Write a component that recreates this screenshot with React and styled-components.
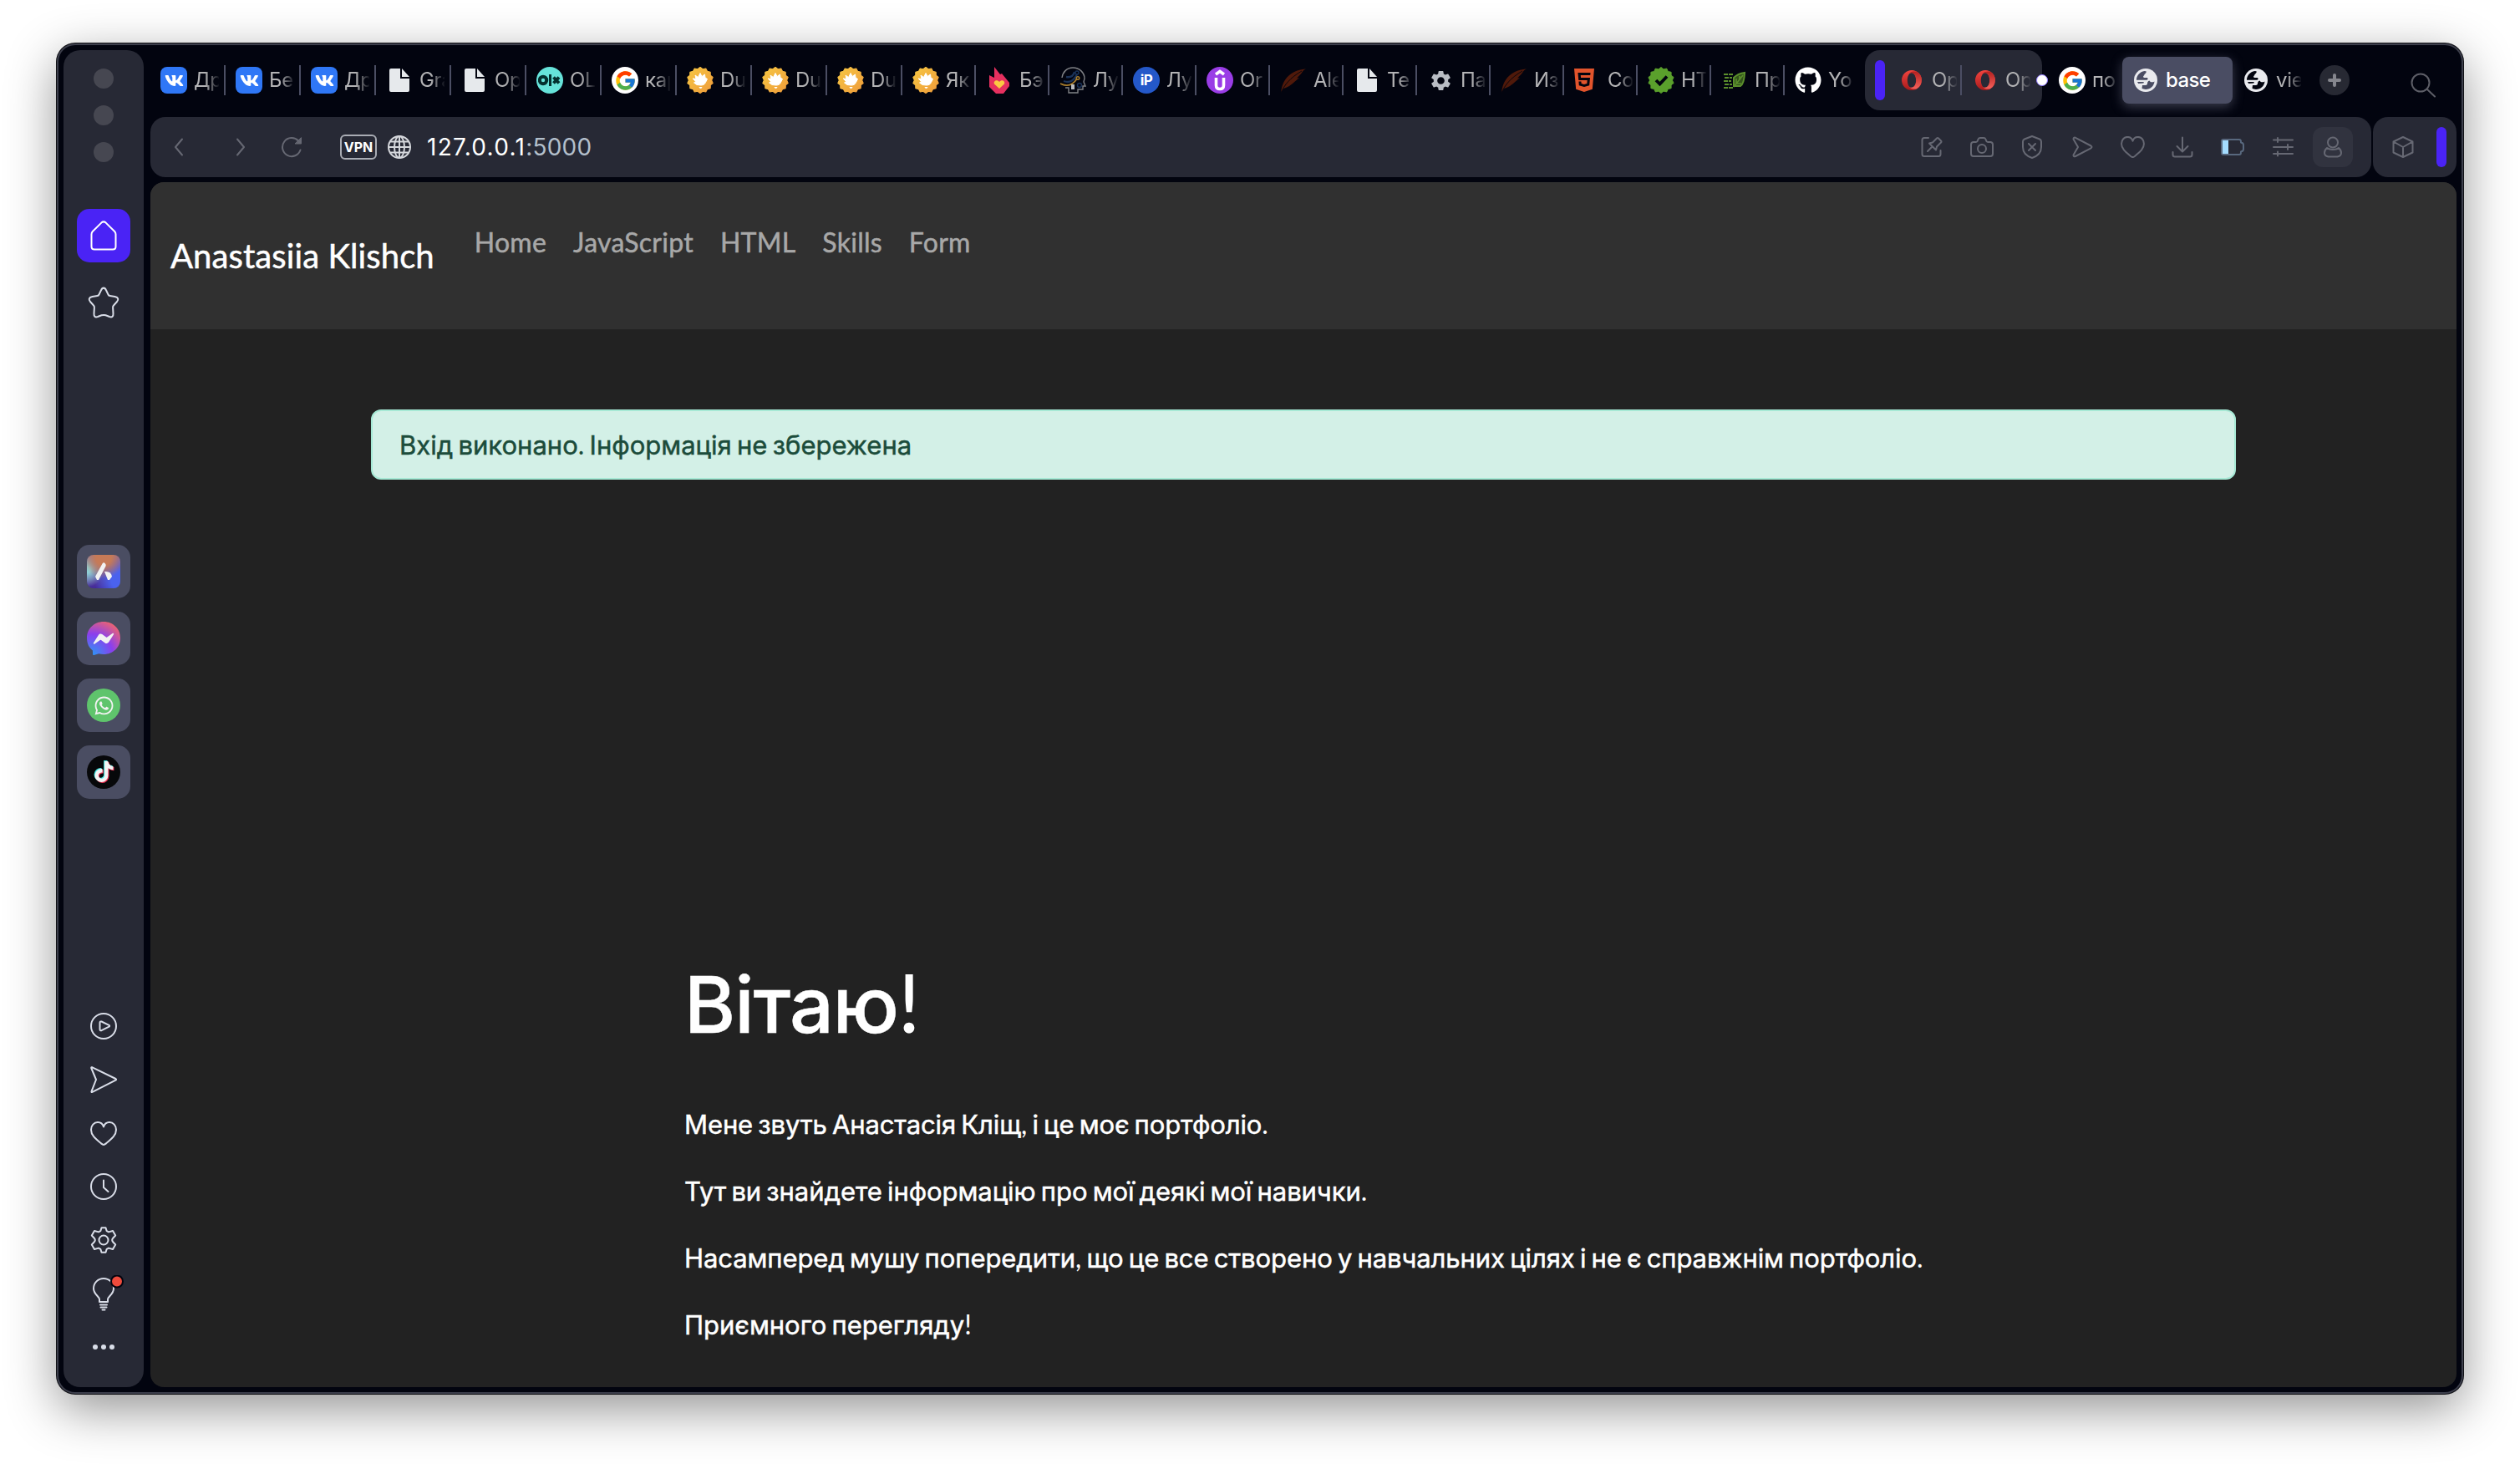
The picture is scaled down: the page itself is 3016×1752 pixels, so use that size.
import React from "react";
import styled, { createGlobalStyle, css } from "styled-components";
import { FaGithub, FaHtml5, FaWhatsapp, FaTiktok, FaVk } from "react-icons/fa";
import { FcGoogle } from "react-icons/fc";
import { MdSettings } from "react-icons/md";

const UI = `Inter, "Liberation Sans", sans-serif`;
const LATO = `Lato, "Liberation Sans", sans-serif`;

const GlobalStyle = createGlobalStyle`
  *, *::before, *::after { box-sizing: border-box; }
  body { margin: 0; background: #fff; font-family: ${UI}; overflow: hidden; }
  svg { display: block; flex: none; }
  h1, p { margin: 0; }
`;

const Desktop = styled.div`
  width: 3016px;
  height: 1752px;
  padding: 52px 68px 84px;
  background: #fff;
`;
const Window = styled.div`
  display: flex;
  gap: 8px;
  width: 2880px;
  height: 1616px;
  padding: 8px;
  border-radius: 22px;
  background: #02040f;
  box-shadow: inset 0 0 0 2px #3d3f4c, 0 0 0 1px #101014, 0 18px 60px rgba(0, 0, 0, 0.43);
`;

/* ---------- sidebar ---------- */
const Sidebar = styled.aside`
  display: flex;
  flex-direction: column;
  align-items: center;
  width: 96px;
  height: 1600px;
  border-radius: 20px;
  background: #272935;
  color: #d9dde8;
`;
const Lights = styled.div`
  display: flex;
  flex-direction: column;
  gap: 20px;
  margin-top: 22px;
`;
const Light = styled.span`
  width: 24px;
  height: 24px;
  border-radius: 50%;
  background: #464751;
`;
const Tile = styled.div`
  display: grid;
  place-items: center;
  width: 64px;
  height: 64px;
  border-radius: 15px;
  background: ${(p) => p.$bg || "#4a4d62"};
`;
const Workspaces = styled.div`
  display: flex;
  flex-direction: column;
  align-items: center;
  gap: 16px;
  margin-top: 56px;
`;
const Slot = styled.div`
  display: grid;
  place-items: center;
  width: 64px;
  height: 64px;
`;
const Messengers = styled(Workspaces)`
  margin-top: 258px;
`;
const Tools = styled.div`
  display: flex;
  flex-direction: column;
  align-items: center;
  margin-top: 240px;
`;
const AppDisc = styled.div`
  display: grid;
  place-items: center;
  width: 40px;
  height: 40px;
  border-radius: ${(p) => p.$r || "50%"};
  background: ${(p) => p.$bg};
  color: #f2f2f2;
`;

/* ---------- tab strip ---------- */
const Main = styled.div`
  display: flex;
  flex-direction: column;
  width: 2760px;
`;
const TabStrip = styled.div`
  display: flex;
  align-items: center;
  height: 72px;
`;
const Tab = styled.div`
  display: flex;
  align-items: center;
  flex: none;
  width: ${(p) => p.$w || 88}px;
  height: 56px;
  padding-left: 12px;
  border-radius: 8px;
  ${(p) =>
    p.$active &&
    css`
      background: #4a4d63;
      box-shadow: 0 4px 14px rgba(150, 150, 175, 0.38);
    `}
`;
const Favicon = styled.span`
  display: grid;
  place-items: center ${(p) => (p.$start ? "start" : "center")};
  flex: none;
  width: 32px;
  height: 32px;
  margin-right: 8px;
`;
const TabLabel = styled.span`
  width: ${(p) => (p.$active ? 70 : 30)}px;
  overflow: hidden;
  white-space: nowrap;
  font: ${(p) => (p.$active ? 500 : 400)} 24px/36px ${UI};
  letter-spacing: ${(p) => (p.$active ? "-0.6px" : "-0.3px")};
  color: ${(p) => (p.$active ? "#fff" : "#b4b4b6")};
  ${(p) => !p.$active && "mask-image: linear-gradient(90deg, #000 45%, transparent 104%);"}
`;
const Divider = styled.span`
  width: 2px;
  height: 36px;
  margin-left: auto;
  background: #4b4e63;
`;
const Disc = styled.span`
  display: grid;
  place-items: center;
  width: 32px;
  height: 32px;
  border-radius: ${(p) => p.$r || "50%"};
  background: ${(p) => p.$bg};
  color: ${(p) => p.$c || "#fff"};
  font: 700 ${(p) => p.$fs || 17}px/32px ${UI};
  letter-spacing: -0.5px;
`;
const TabGroup = styled.div`
  position: relative;
  display: flex;
  align-items: center;
  width: 212px;
  height: 72px;
  margin: 0 8px;
  padding-left: 12px;
  border-radius: 18px;
  background: #272935;
`;
const Pill = styled.span`
  flex: none;
  width: 12px;
  height: 48px;
  margin-right: ${(p) => p.$gap || 0}px;
  border-radius: 6px;
  background: #4a23f5;
`;
const GroupDot = styled.span`
  position: absolute;
  right: -7px;
  top: 29px;
  width: 14px;
  height: 14px;
  border-radius: 50%;
  background: #fff;
  border: 1px solid #8f78ff;
`;
const NewTab = styled.div`
  display: grid;
  place-items: center;
  width: 36px;
  height: 36px;
  margin-left: 16px;
  border-radius: 50%;
  background: #272933;
`;
const SearchTabs = styled.div`
  margin: 12px 0 0 73px;
  color: #5d5e67;
`;

/* ---------- address bar ---------- */
const BarRow = styled.div`
  display: flex;
  gap: 2px;
  margin-top: 8px;
`;
const Bar = styled.div`
  display: flex;
  align-items: center;
  justify-content: space-between;
  height: 72px;
  width: ${(p) => p.$w}px;
  padding: ${(p) => p.$pad};
  border-radius: 18px;
  background: #272935;
  color: #666873;
`;
const Address = styled.div`
  display: flex;
  align-items: center;
`;
const Forward = styled.span`
  margin: 0 42px 0 62px;
`;
const VpnBadge = styled.span`
  width: 44px;
  height: 30px;
  margin: 0 13px 0 45px;
  border: 2px solid #a9acb4;
  border-radius: 6px;
  font: 700 16px/26px ${UI};
  text-align: center;
  color: #fff;
`;
const Url = styled.span`
  margin-left: 19px;
  font: 400 28px/40px ${UI};
  letter-spacing: 1.3px;
  color: #fff;
`;
const Port = styled.span`
  letter-spacing: 0.2px;
  color: #b3bfcb;
`;
const Actions = styled.div`
  display: grid;
  grid-template-columns: repeat(9, 60px);
  place-items: center;
`;
const Profile = styled.span`
  display: grid;
  place-items: center;
  width: 48px;
  height: 48px;
  border-radius: 12px;
  background: #31333f;
`;

/* ---------- page ---------- */
const Page = styled.main`
  height: 1442px;
  margin-top: 6px;
  border-radius: 16px;
  overflow: hidden;
  background: #222;
`;
const SiteNav = styled.nav`
  display: flex;
  align-items: flex-start;
  height: 176px;
  padding-left: 24px;
  background: #303030;
  font-family: ${LATO};
`;
const Brand = styled.span`
  margin-top: 58px;
  font-size: 40px;
  line-height: 60px;
  letter-spacing: 0.1px;
  color: #fff;
  -webkit-text-stroke: 0.5px currentColor;
`;
const Links = styled.div`
  display: flex;
  gap: 32px;
  margin: 48px 0 0 48px;
`;
const NavLink = styled.span`
  font-size: 32px;
  line-height: 48px;
  letter-spacing: 0.25px;
  color: #a8a8a8;
  -webkit-text-stroke: 0.5px currentColor;
`;
const Alert = styled.div`
  width: 2232px;
  height: 84px;
  margin: 96px 0 0 264px;
  padding-left: 32px;
  border: 2px solid #a6e9d5;
  border-radius: 12px;
  background: #d3f0e7;
  font: 400 32px/80px ${LATO};
  word-spacing: -2px;
  color: #1c4c3b;
`;
const Hero = styled.section`
  padding: 565px 0 0 639px;
  color: #fff;
  font-family: ${LATO};
`;
const Title = styled.h1`
  font-size: 96px;
  font-weight: 500;
  line-height: 120px;
`;
const Line = styled.p`
  font-size: 32px;
  line-height: 48px;
  margin-bottom: 32px;
  word-spacing: -2px;
`;
const Copy = styled.div`
  margin-top: 62px;
`;
const Cyr = styled.span`
  font-family: ${UI};
  font-size: 0.97em;
  line-height: 0;
  letter-spacing: ${(p) => p.$ls || 0}px;
  -webkit-text-stroke: 0.5px currentColor;
`;

/* Cyrillic runs use the UI face, everything else stays in Lato */
const Mixed = ({ text, ls }) =>
  text
    .split(/([\u0400-\u04FF]+)/)
    .map((part, i) => (i % 2 ? <Cyr key={i} $ls={ls}>{part}</Cyr> : part));

/* ---------- icons ---------- */
const Stroke = ({ w, h = w, vb, sw = 2, children, ...rest }) => (
  <svg width={w} height={h} viewBox={vb || `0 0 ${w} ${h}`} fill="none" stroke="currentColor" strokeWidth={sw} strokeLinecap="round" strokeLinejoin="round" {...rest}>
    {children}
  </svg>
);

const VkIcon = () => (
  <Disc $bg="#2f77f6" $r="8px"><FaVk size={23} /></Disc>
);
const DocIcon = () => (
  <svg width="24" height="28" viewBox="0 0 24 28" fill="#e6e9ec">
    <path d="M2 0h11v12h11v14q0 2-2 2H2q-2 0-2-2V2q0-2 2-2z" />
    <path d="M15 0l9 10h-9z" />
  </svg>
);
const OlxIcon = () => (
  <Disc $bg="#66e3da">
    <svg width="28" height="16" viewBox="0 0 28 16" fill="none" stroke="#04302f">
      <circle cx="6" cy="8" r="4.2" strokeWidth="4" />
      <path d="M14.500 1v14" strokeWidth="3" />
      <path d="M18.500 4.500l6.500 7M25 4.500l-6.500 7" strokeWidth="3.800" />
    </svg>
  </Disc>
);
const GoogleIcon = () => <Disc $bg="#fff"><FcGoogle size={27} /></Disc>;
const gearPoints = (n, r1, r2, c) =>
  Array.from({ length: n * 2 }, (_, i) => {
    const a = (Math.PI * i) / n - Math.PI / 2;
    const r = i % 2 ? r2 : r1;
    return `${(c + r * Math.cos(a)).toFixed(2)},${(c + r * Math.sin(a)).toFixed(2)}`;
  }).join(" ");
const SunIcon = () => (
  <svg width="32" height="32" viewBox="0 0 32 32">
    <defs>
      <linearGradient id="sun" x1="0" y1="0" x2="1" y2="1">
        <stop offset="0" stopColor="#f7c843" />
        <stop offset="1" stopColor="#ee9a3a" />
      </linearGradient>
    </defs>
    <polygon points={gearPoints(14, 15.5, 13.6, 16)} fill="url(#sun)" stroke="url(#sun)" strokeWidth="1.200" strokeLinejoin="round" />
    <path d="M7 14l4 .5-1-4.500 3.500 2.500L16 7.500l2 4 3.500-2.500.500 4 2.500 1.500-2 4c-1 2.500-3 3.500-5.500 3.500l-5-.5-3.500-2.500 2-1.500z" fill="#fff" stroke="#fff" strokeLinejoin="round" />
    <path d="M14.500 24h4q-.5 2-2 2t-2-2z" fill="#fff" />
  </svg>
);
const FlameIcon = () => (
  <svg width="24" height="32" viewBox="0 0 24 32">
    <path d="M6 0l7 9 2-1 9 11v4l-7 9H8l-8-8V10l6 3z" fill="#e6305f" />
    <path d="M12 26l-6-5.500c-1.500-4 3.500-6 6-2.500 2.500-3.500 7.500-1.500 6 2.500z" fill="#fbc943" />
  </svg>
);
const HeadIcon = () => (
  <svg width="32" height="32" viewBox="0 0 32 32" fill="none" strokeWidth="1.400">
    <path d="M3 13C4 6 9 1 16 1c8 0 14 6 14 13l-1 4 2 5h-3v4h-6v4h-11v-6H7" stroke="#808286" />
    <path d="M5 17c8 3 12-1 16-8M8 12c6 1 9-2 10-6" stroke="#1a3258" strokeWidth="2.400" />
    <circle cx="21" cy="7" r="2" stroke="#1a3258" />
    <path d="M1 20c8 4 15 2 20-6" stroke="#a87d2c" strokeWidth="1.800" />
    <circle cx="22" cy="13.500" r="1.800" stroke="#a87d2c" />
    <circle cx="24" cy="22" r="2.500" stroke="#1a3258" />
    <path d="M14 21h4v6h-4z" fill="#b9bbbf" />
  </svg>
);
const UIcon = () => (
  <Disc $bg="#9a3de6">
    <Stroke w={16} h={26} sw={3.6} strokeLinecap="butt" strokeLinejoin="miter">
      <path d="M3 6l5-3.500 5 3.500" />
      <path d="M3.500 10v9q0 4.500 4.500 4.500t4.500-4.500v-9" />
    </Stroke>
  </Disc>
);
const FeatherIcon = () => (
  <svg width="32" height="32" viewBox="0 0 32 32">
    <path d="M1 31c1-8 3-15 10-21C17 5 24 3 31 2.500c-3 1-4 3-6 6l-5 5 3-.5-8 7-4 3-4 2-3 1z" fill="#4f190a" />
    <path d="M1 31C5 22 12 13 26 5" stroke="#02040f" strokeWidth="0.900" fill="none" />
  </svg>
);
const CheckIcon = () => (
  <svg width="32" height="32" viewBox="0 0 32 32">
    <polygon points={gearPoints(14, 15.5, 13.4, 16)} fill="#5aa02c" stroke="#5aa02c" strokeLinejoin="round" />
    <path d="M10 16l4.500 4.500L23 11.500" fill="none" stroke="#02040f" strokeWidth="3.800" />
  </svg>
);
const LeafIcon = () => (
  <svg width="28" height="24" viewBox="0 0 28 24" fill="none" stroke="#5b8f2c" strokeWidth="2">
    <path d="M1 5h12M2 9h9M1 13h9M2 17h9M1 21h12" strokeDasharray="5 1" />
    <path d="M13 19V9q5-5 13-6-.5 13-5 16z" fill="#33541c" />
    <path d="M13 20L24 6M16 10v6h6M20 7v5" strokeWidth="1.600" />
  </svg>
);
const OperaIcon = () => (
  <svg width="24" height="24" viewBox="0 0 24 24">
    <defs>
      <linearGradient id="op" x1="0" y1="0" x2="0" y2="1">
        <stop offset="0" stopColor="#f2453f" />
        <stop offset="1" stopColor="#a81a1c" />
      </linearGradient>
      <linearGradient id="op2" x1="0" y1="0" x2="0" y2="1">
        <stop offset="0" stopColor="#b5201f" />
        <stop offset="1" stopColor="#f4625c" />
      </linearGradient>
    </defs>
    <path fillRule="evenodd" fill="url(#op)" d="M12 0a12 12 0 1 0 0 24 12 12 0 0 0 0-24zm0 3c3 0 5.200 4 5.200 9S15 21 12 21s-5.200-4-5.200-9S9 3 12 3z" />
    <path fill="url(#op2)" d="M9 3.800C11 1.500 15 1 18 1.700A12 12 0 0 1 18 22.300c-3 .7-7 .2-9-2.100 4 2 8.200-1.500 8.200-8.200S13 1.800 9 3.800z" />
  </svg>
);
const EarthIcon = ({ bg = "#02040f" }) => (
  <svg width="28" height="28" viewBox="0 0 28 28">
    <circle cx="14" cy="14" r="14" fill="#e9eaee" />
    <path fill={bg} d="M3 13.500C3 8.500 7 4 12.500 3l2 .2c.8 1.300-.8 3-2 3.800 0 1.500-1.500 1.800-1.500 3 0 1 2 1 4 1 2.500 0 2 3-.5 2.800H3z" />
    <path fill={bg} d="M9.500 23.800l.5-3.800h4c1 0 2-.8 2-2s.5-3 2.500-3.500c1 2 3.500 2.500 6 1-.5 5.500-5 9.500-10.500 9.500-1.700 0-3.200-.5-4.500-1.200z" />
    <path fill={bg} d="M4 16h7c1.200 0 1.200 1.500 0 1.500l-2 .3-3.800.2z" />
  </svg>
);
const GridGlobe = () => (
  <Stroke w={28} color="#d5d7dc" sw={2}>
    <circle cx="14" cy="14" r="13" />
    <ellipse cx="14" cy="14" rx="6" ry="13" />
    <path d="M1.500 14h25M14 1v26M3.500 7.500h21M3.500 20.500h21" />
  </Stroke>
);
const HeartIcon = ({ w = 32, h = 29, sw = 2 }) => (
  <Stroke w={w} h={h} vb="0 0 32 29" sw={sw}>
    <path d="M16 28c-1 0-2-.8-3-1.600C6 20.500 1 16.500 1 10c0-5 3.500-9 8-9 3.500 0 6 2 7 5.500C17 3 19.500 1 23 1c4.500 0 8 4 8 9 0 6.500-5 10.500-12 16.400-1 .8-2 1.600-3 1.600z" />
  </Stroke>
);
const HomeIcon = () => (
  <Stroke w={32} h={36} color="#fff">
    <path d="M1.500 16.500q0-2 1.300-3.500L13.300 2.600q2.700-2.400 5.400 0L29.200 13q1.300 1.500 1.300 3.500V31q0 3.500-3.500 3.500H5Q1.500 34.500 1.500 31z" />
  </Stroke>
);
const StarIcon = () => (
  <Stroke w={38} h={40} vb="0 -1 38 38" preserveAspectRatio="none">
    <path d="M19 1.500c1.500 0 2.300 1 3 2.500l2.500 5c.4.900 1 1.300 2 1.400l6 .9c4 .7 5 3.200 2.300 6l-3.800 4c-.8.800-1 1.500-.9 2.500l.4 6.700c.3 3.700-1.500 4.700-4.500 3.700l-4.500-1.700q-2-.6-5 0l-4.500 1.700c-3 1-4.800 0-4.500-3.700l.4-6.700c.1-1-.1-1.700-.9-2.500l-3.800-4c-2.700-2.800-1.700-5.300 2.300-6l6-.9c1-.1 1.600-.5 2-1.400l2.500-5c.7-1.500 1.500-2.500 3-2.500z" />
  </Stroke>
);
const AriaIcon = () => (
  <AppDisc $r="8px" $bg="radial-gradient(circle at 50% 8%, #c67a57 0 22%, transparent 60%), radial-gradient(circle at 0 45%, #8fd0d6 0 8%, transparent 45%), radial-gradient(circle at 100% 75%, #4a62ee 0 22%, transparent 62%), linear-gradient(#8a6a98, #432a9a)">
    <svg width="20" height="22" viewBox="0 0 20 22" fill="#f2f2f2">
      <path d="M8.500 1.500Q10.500-1 12.300 2q.8 1.500 0 3L4 21H2L0 17z" />
      <path d="M11 11q8-1 9 6l-3 4h-2z" />
    </svg>
  </AppDisc>
);
const MessengerIcon = () => (
  <svg width="40" height="40" viewBox="0 0 40 40">
    <defs>
      <radialGradient id="ms" cx="0.150" cy="1" r="1.150">
        <stop offset="0" stopColor="#2a98f5" />
        <stop offset="0.550" stopColor="#8a3fee" />
        <stop offset="1" stopColor="#f2656a" />
      </radialGradient>
    </defs>
    <path fill="url(#ms)" d="M20 0c11.500 0 20 8.500 20 19.500S31.500 39 20 39c-2 0-4-.3-5.800-.8L8.500 40q-1.300.3-1.400-1l-.2-4.500C2.500 31 0 26 0 19.500 0 8.500 8.500 0 20 0z" />
    <path fill="#f2f2f2" d="M8 25.200l5.900-9.300c1-1.500 3-1.900 4.400-.8l4.700 3.500q.6.500 1.200 0L30.600 14c.8-.7 2 .3 1.400 1.300l-5.900 9.300c-1 1.500-3 1.900-4.400.8L17 21.900q-.6-.5-1.200 0L9.400 26.500c-.9.700-2-.4-1.400-1.300z" />
  </svg>
);
const TikTok = () => (
  <AppDisc $bg="#07080a">
    <svg width="27" height="28" viewBox="-1 -1 27 28">
      <FaTiktok x="-1" y="-1" size={25} color="#43e5e0" />
      <FaTiktok x="1" y="1" size={25} color="#ee3355" />
      <FaTiktok x="0" y="0" size={25} color="#f4f4f4" />
    </svg>
  </AppDisc>
);
const CogIcon = () => (
  <Stroke w={32}>
    <path d="M13.500 1.200h5l1.200 4 2.300 1.200 5-1.400 3.200 5.500-3 3.200q-.8 1-1 2.300.2 1.300 1 2.300l3 3.200-3.200 5.500-5-1.400-2.300 1.200-1.200 4h-5l-1.200-4-2.300-1.200-5 1.400-3.200-5.500 3-3.200q.8-1 1-2.300-.2-1.300-1-2.300l-3-3.200L5 5l5 1.400 2.300-1.200z" />
    <circle cx="16" cy="16" r="5.500" />
  </Stroke>
);
const BulbIcon = () => (
  <Stroke w={52} h={44} vb="-13 0 52 44">
    <path d="M8 32v-3C8 25.500 1 23 1 16 1 9 6.500 4 13 4s12 5 12 12c0 7-7 9.500-7 13v3" />
    <path d="M9 32h8M9 35.500h8M9.500 38.500h7M11.500 41.500h3" />
    <circle cx="29" cy="7.500" r="7" fill="#ee4b3c" stroke="#02040f" />
  </Stroke>
);
const sideTools = [
  <Stroke w={32} key="play"><circle cx="16" cy="16" r="15" /><path d="M11.500 12q0-2 2-1.500l9 4.300q1.300.9 0 1.900l-9 4.500q-2 .5-2-1.500z" /></Stroke>,
  <Stroke w={32} key="send"><path d="M1.200 2q0-1.200 1.300-.7L30.500 15q1.300.8 0 1.600L2.500 30.900q-1.300.5-1-.8L7 16z" /></Stroke>,
  <HeartIcon key="heart" />,
  <Stroke w={32} key="clock"><circle cx="16" cy="16" r="15" /><path d="M16 8.500V17l5.500 5" /></Stroke>,
  <CogIcon key="cog" />,
  <BulbIcon key="bulb" />,
  <svg key="dots" width="26" height="6" viewBox="0 0 26 6" fill="currentColor"><circle cx="3" cy="3" r="3" /><circle cx="13" cy="3" r="3" /><circle cx="23" cy="3" r="3" /></svg>,
];
const actions = [
  <Stroke w={26} key="pin"><path d="M9 2H4Q1.500 2 1.500 4.500v17Q1.500 24 4 24h17q2.500 0 2.500-2.500V17M8 18l5-5M10 8.500l8 8 1-4 5-5q1-1 0-2l-3-3q-1-1-2 0l-5 5z" /></Stroke>,
  <Stroke w={28} h={26} key="cam"><path d="M1 10q0-2.500 2.500-3H7q1.500 0 2-2l.6-1.500Q10.200 2 12 2h4q1.800 0 2.400 1.500L19 5q.5 2 2 2h3.500Q27 7.500 27 10v11q0 3-3 3H4q-3 0-3-3z" /><circle cx="14" cy="15" r="5" /></Stroke>,
  <Stroke w={24} h={28} key="shield"><path d="M12 1l9 3.500q2 .8 2 3V14c0 6.500-5 11-11 13C6 25 1 20.500 1 14V7.500q0-2.200 2-3zM8 10l8 8M16 10l-8 8" /></Stroke>,
  <Stroke w={26} h={26} key="send"><path d="M2.500 3.500q0-2.500 2.500-1.700L23.500 11.500q2 1.300 0 2.800L5 24q-2.500 1-2.500-1.500L8 13z" /></Stroke>,
  <HeartIcon key="heart" w={29} h={26} sw={2.2} />,
  <Stroke w={26} h={26} key="down"><path d="M13 1.500V18M6.500 12l6.500 6.500 6.500-6.500M1.500 19v3q0 2.500 2.500 2.500h18q2.500 0 2.500-2.500v-3" /></Stroke>,
  <Stroke w={28} h={20} key="bat" color="#58687e"><path d="M3 1h19q2 0 2 2.500v1q3 .5 3 3v5q0 2.500-3 3v1q0 2.500-2 2.500H3q-2 0-2-2V3q0-2 2-2z" /><path d="M2 2h7v16H2z" fill="#a4dcff" stroke="none" /></Stroke>,
  <Stroke w={25} h={24} key="tune"><path d="M1 3.500h23M1 12h23M1 20h23M6 1v5M18 9v6M6 17.500v5" /></Stroke>,
  <Profile key="me"><Stroke w={22} h={26}><circle cx="11" cy="7.500" r="6" /><path d="M4 14q-3 2.500-3 6t4.500 4.500h11Q21 23.500 21 20t-3-6Q15.500 16 11 16t-7-2z" /></Stroke></Profile>,
];

/* ---------- tab data ---------- */
const Html5Icon = styled(FaHtml5)`
  width: 24px;
  height: 32px;
  color: #e2542c;
`;
const vk = <VkIcon />, doc = <DocIcon />, sun = <SunIcon />, feather = <FeatherIcon />;
const tabs = [
  ["Др", vk, 90], ["Бе", vk, 90], ["Др", vk, 90], ["Gra", doc, 90], ["Op", doc, 90],
  ["OL", <OlxIcon />, 90], ["кар", <GoogleIcon />, 90], ["Du", sun, 90], ["Du", sun, 90], ["Du", sun, 90],
  ["Як", sun], ["Бэ", <FlameIcon />], ["Лу", <HeadIcon />],
  ["Лу", <Disc $bg="#2458c9" $fs={17}>iP</Disc>], ["Or", <UIcon />], ["Ale", feather], ["Te", doc],
  ["Па", <MdSettings size={29} color="#b9bdc4" />], ["Из", feather],
  ["Co", <Html5Icon />, 88, true],
  ["HT", <CheckIcon />], ["Пр", <LeafIcon />],
  ["Yo", <FaGithub size={32} color="#fff" />],
];
const TabItem = ({ label, icon, w, start, active, divider = true }) => (
  <Tab $w={w} $active={active}>
    <Favicon $start={start}>{icon}</Favicon>
    <TabLabel $active={active}>{label}</TabLabel>
    {divider && <Divider />}
  </Tab>
);

export default function App() {
  return (
    <Desktop>
      <GlobalStyle />
      <Window>
        <Sidebar>
          <Lights><Light /><Light /><Light /></Lights>
          <Workspaces>
            <Tile $bg="#4a23f5"><HomeIcon /></Tile>
            <Slot><StarIcon /></Slot>
          </Workspaces>
          <Messengers>
            <Tile><AriaIcon /></Tile>
            <Tile><MessengerIcon /></Tile>
            <Tile><AppDisc $bg="#5fc46c"><FaWhatsapp size={25} /></AppDisc></Tile>
            <Tile><TikTok /></Tile>
          </Messengers>
          <Tools>{sideTools.map((icon, i) => <Slot key={i}>{icon}</Slot>)}</Tools>
        </Sidebar>
        <Main>
          <TabStrip>
            {tabs.map(([label, icon, w, start], i) => (
              <TabItem key={i} label={label} icon={icon} w={w} start={start} divider={i < tabs.length - 1} />
            ))}
            <TabGroup>
              <Pill $gap={4} />
              <TabItem label="Op" icon={<OperaIcon />} />
              <TabItem label="Op" icon={<OperaIcon />} divider={false} />
              <GroupDot />
            </TabGroup>
            <TabItem label="по" icon={<GoogleIcon />} divider={false} />
            <TabItem label="base" icon={<EarthIcon bg="#4a4d63" />} w={132} active divider={false} />
            <TabItem label="vie" icon={<EarthIcon />} divider={false} />
            <NewTab><Stroke w={18} color="#85868d" sw={4}><path d="M9 3v12M3 9h12" /></Stroke></NewTab>
            <SearchTabs><Stroke w={30}><circle cx="12" cy="12" r="10.500" /><path d="M20 20l9 8.500" /></Stroke></SearchTabs>
          </TabStrip>
          <BarRow>
            <Bar $w={2658} $pad="0 16px 0 28px">
              <Address>
                <Stroke w={12} h={22}><path d="M10 1.500L2 11l8 9.500" /></Stroke>
                <Forward><Stroke w={12} h={22}><path d="M2 1.500l8 9.500-8 9.500" /></Stroke></Forward>
                <Stroke w={26} h={26}><path d="M23.500 16.500A11 11 0 1 1 21 5.500" /><path d="M24.500 2v7h-7z" fill="currentColor" strokeWidth="1" /></Stroke>
                <VpnBadge>VPN</VpnBadge>
                <GridGlobe />
                <Url>127.0.0.1<Port>:5000</Port></Url>
              </Address>
              <Actions>{actions}</Actions>
            </Bar>
            <Bar $w={100} $pad="0 12px 0 22px">
              <Stroke w={28} h={28}><path d="M14 2l11.500 5.500v13L14 26 2.500 20.500v-13zM2.500 7.500L14 14l11.500-6.500M14 14v12" /></Stroke>
              <Pill />
            </Bar>
          </BarRow>
          <Page>
            <SiteNav>
              <Brand>Anastasiia Klishch</Brand>
              <Links>
                {["Home", "JavaScript", "HTML", "Skills", "Form"].map((l) => <NavLink key={l}>{l}</NavLink>)}
              </Links>
            </SiteNav>
            <Alert><Mixed ls={0} text="Вхід виконано. Інформація не збережена" /></Alert>
            <Hero>
              <Title><Mixed ls={-1} text="Вітаю!" /></Title>
              <Copy>
                <Line><Mixed ls={-0.12} text="Мене звуть Анастасія Кліщ, і це моє портфоліо." /></Line>
                <Line><Mixed ls={-0.08} text="Тут ви знайдете інформацію про мої деякі мої навички." /></Line>
                <Line><Mixed ls={-0.1} text="Насамперед мушу попередити, що це все створено у навчальних цілях і не є справжнім портфоліо." /></Line>
                <Line><Mixed ls={-0.02} text="Приємного перегляду!" /></Line>
              </Copy>
            </Hero>
          </Page>
        </Main>
      </Window>
    </Desktop>
  );
}
